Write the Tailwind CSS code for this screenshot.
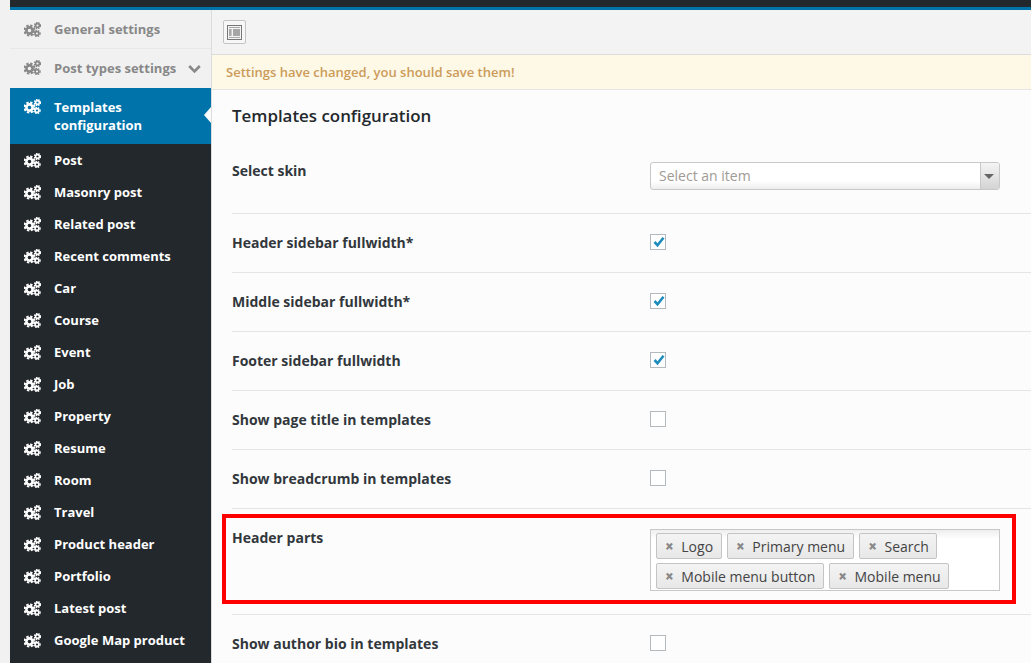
<!DOCTYPE html>
<html lang="en">
<head>
<meta charset="UTF-8">
<title>Templates configuration</title>
<script src="https://cdn.jsdelivr.net/npm/@tailwindcss/browser@4"></script>
</head>
<body class="h-[663px] w-[1031px] overflow-hidden bg-[#f1f1f1] font-['Open_Sans',sans-serif]">
<svg class="hidden">
  <symbol id="cogs" viewBox="0 0 17 15">
    <circle cx="5.5" cy="8.5" r="3.1" fill="none" stroke="currentColor" stroke-width="2.6"/>
    <circle cx="5.5" cy="8.5" r="5" fill="none" stroke="currentColor" stroke-width="2" stroke-dasharray="2.4 1.53"/>
    <circle cx="13.5" cy="3.5" r="1.9" fill="none" stroke="currentColor" stroke-width="1.6"/>
    <circle cx="13.5" cy="3.5" r="3.1" fill="none" stroke="currentColor" stroke-width="1.2" stroke-dasharray="1.5 1.03"/>
    <circle cx="13" cy="11.5" r="1.9" fill="none" stroke="currentColor" stroke-width="1.6"/>
    <circle cx="13" cy="11.5" r="3.1" fill="none" stroke="currentColor" stroke-width="1.2" stroke-dasharray="1.5 1.03"/>
  </symbol>
</svg>
<div class="ml-[10px] h-[7px] bg-[#23282d]"></div>
<div class="ml-[10px] h-[3px] bg-[#0073aa]"></div>
<div class="ml-[10px] flex h-[653px]">
  <!-- Sidebar -->
  <aside class="w-[201px] shrink-0 bg-[#23282d] text-[13px] leading-[18px] font-bold text-white">
    <div class="flex h-[39px] items-center gap-[13px] border-b border-[#e8e8e8] bg-[#f1f1f1] pl-[14px] text-[#888]">
      <svg class="h-[15px] w-[17px]"><use href="#cogs"/></svg><span>General settings</span>
    </div>
    <div class="flex h-[39px] items-center gap-[13px] bg-[#f1f1f1] pb-[2px] pl-[14px] text-[#888]">
      <svg class="h-[15px] w-[17px]"><use href="#cogs"/></svg><span>Post types settings</span>
      <svg class="mt-[2px] -ml-[1px] h-[10px] w-[13px]" viewBox="0 0 13 10" fill="none" stroke="currentColor" stroke-width="2.6"><path d="M1.2 2l5.3 5.3L11.8 2"/></svg>
    </div>
    <div class="relative flex h-[56px] gap-[13px] bg-[#0073aa] pt-[10px] pl-[14px]">
      <svg class="mt-[1px] h-[15px] w-[17px]"><use href="#cogs"/></svg><span>Templates<br>configuration</span>
      <div class="absolute top-[19px] right-0 border-y-[8px] border-r-[7px] border-y-transparent border-r-[#fcfcfc]"></div>
    </div>
    <div class="flex h-[32px] items-center gap-[13px] pl-[14px]"><svg class="h-[15px] w-[17px]"><use href="#cogs"/></svg><span>Post</span></div>
    <div class="flex h-[32px] items-center gap-[13px] pl-[14px]"><svg class="h-[15px] w-[17px]"><use href="#cogs"/></svg><span>Masonry post</span></div>
    <div class="flex h-[32px] items-center gap-[13px] pl-[14px]"><svg class="h-[15px] w-[17px]"><use href="#cogs"/></svg><span>Related post</span></div>
    <div class="flex h-[32px] items-center gap-[13px] pl-[14px]"><svg class="h-[15px] w-[17px]"><use href="#cogs"/></svg><span>Recent comments</span></div>
    <div class="flex h-[32px] items-center gap-[13px] pl-[14px]"><svg class="h-[15px] w-[17px]"><use href="#cogs"/></svg><span>Car</span></div>
    <div class="flex h-[32px] items-center gap-[13px] pl-[14px]"><svg class="h-[15px] w-[17px]"><use href="#cogs"/></svg><span>Course</span></div>
    <div class="flex h-[32px] items-center gap-[13px] pl-[14px]"><svg class="h-[15px] w-[17px]"><use href="#cogs"/></svg><span>Event</span></div>
    <div class="flex h-[32px] items-center gap-[13px] pl-[14px]"><svg class="h-[15px] w-[17px]"><use href="#cogs"/></svg><span>Job</span></div>
    <div class="flex h-[32px] items-center gap-[13px] pl-[14px]"><svg class="h-[15px] w-[17px]"><use href="#cogs"/></svg><span>Property</span></div>
    <div class="flex h-[32px] items-center gap-[13px] pl-[14px]"><svg class="h-[15px] w-[17px]"><use href="#cogs"/></svg><span>Resume</span></div>
    <div class="flex h-[32px] items-center gap-[13px] pl-[14px]"><svg class="h-[15px] w-[17px]"><use href="#cogs"/></svg><span>Room</span></div>
    <div class="flex h-[32px] items-center gap-[13px] pl-[14px]"><svg class="h-[15px] w-[17px]"><use href="#cogs"/></svg><span>Travel</span></div>
    <div class="flex h-[32px] items-center gap-[13px] pl-[14px]"><svg class="h-[15px] w-[17px]"><use href="#cogs"/></svg><span>Product header</span></div>
    <div class="flex h-[32px] items-center gap-[13px] pl-[14px]"><svg class="h-[15px] w-[17px]"><use href="#cogs"/></svg><span>Portfolio</span></div>
    <div class="flex h-[32px] items-center gap-[13px] pl-[14px]"><svg class="h-[15px] w-[17px]"><use href="#cogs"/></svg><span>Latest post</span></div>
    <div class="flex h-[32px] items-center gap-[13px] pl-[14px]"><svg class="h-[15px] w-[17px]"><use href="#cogs"/></svg><span>Google Map product</span></div>
  </aside>

  <!-- Main -->
  <main class="min-w-0 flex-1 border-l border-[#dcdcdc] bg-[#fcfcfc]">
    <div class="flex h-[45px] items-center border-b border-[#dcdcdc] bg-[#f3f3f3] pl-[11px]">
      <div class="flex h-[24px] w-[23px] items-center justify-center rounded-[2px] border border-[#c4c4c4] bg-[#f7f7f7]">
        <svg class="h-[15px] w-[15px]" viewBox="0 0 15 15"><rect x="0.5" y="0.5" width="14" height="14" fill="#f4f4f4" stroke="#777"/><rect x="2" y="2" width="11" height="1" fill="#aaa"/><rect x="2" y="12" width="11" height="1" fill="#aaa"/><rect x="2" y="4" width="2.6" height="7" fill="#aaa"/><rect x="6" y="4" width="7" height="7" fill="#a6a6a6"/></svg>
      </div>
    </div>
    <div class="flex h-[35px] items-center border-b border-[#e5e5e5] bg-[#fef8e7] pt-[2px] pl-[14px] text-[13px] font-semibold text-[#cb9c5a]">Settings have changed, you should save them!</div>

    <div class="pl-[20px]">
      <h2 class="pt-[14px] text-[16.9px] leading-[24px] font-semibold text-[#23282d]">Templates configuration</h2>

      <div class="flex h-[86px] border-b border-[#e5e5e5] pt-[32px] text-[14px] leading-[20px] font-bold text-[#32373c]">
        <div class="w-[418px] shrink-0 pt-[1px]">Select skin</div>
        <div class="mt-[2px] flex h-[28px] w-[350px] overflow-hidden rounded-[3px] border border-[#c8c8c8] bg-gradient-to-b from-white from-70% to-[#eeeeee]">
          <span class="flex-1 pl-[8px] text-[14px] leading-[26px] font-normal text-[#a09a94]">Select an item</span>
          <span class="flex w-[19px] items-center justify-center border-l border-[#c8c8c8] bg-gradient-to-b from-[#f4f4f4] to-[#d4d4d4] pr-[3px]">
            <span class="h-0 w-0 border-x-[5px] border-t-[5px] border-x-transparent border-t-[#666]"></span>
          </span>
        </div>
      </div>

      <div class="flex h-[59px] items-center border-b border-[#e5e5e5] pb-[2px] text-[14px] font-bold text-[#32373c]">
        <div class="w-[418px] shrink-0">Header sidebar fullwidth*</div>
        <div class="flex h-[16px] w-[16px] items-center justify-center border border-[#b4b9be] bg-white"><svg class="ml-[2px] h-[12px] w-[12px] shrink-0" viewBox="0 0 12 12" fill="none" stroke="#1e8cbe" stroke-width="2.6"><path d="M1.5 6l3 3.2L10.5 1.8"/></svg></div>
      </div>
      <div class="flex h-[59px] items-center border-b border-[#e5e5e5] pb-[2px] text-[14px] font-bold text-[#32373c]">
        <div class="w-[418px] shrink-0">Middle sidebar fullwidth*</div>
        <div class="flex h-[16px] w-[16px] items-center justify-center border border-[#b4b9be] bg-white"><svg class="ml-[2px] h-[12px] w-[12px] shrink-0" viewBox="0 0 12 12" fill="none" stroke="#1e8cbe" stroke-width="2.6"><path d="M1.5 6l3 3.2L10.5 1.8"/></svg></div>
      </div>
      <div class="flex h-[59px] items-center border-b border-[#e5e5e5] pb-[2px] text-[14px] font-bold text-[#32373c]">
        <div class="w-[418px] shrink-0">Footer sidebar fullwidth</div>
        <div class="flex h-[16px] w-[16px] items-center justify-center border border-[#b4b9be] bg-white"><svg class="ml-[2px] h-[12px] w-[12px] shrink-0" viewBox="0 0 12 12" fill="none" stroke="#1e8cbe" stroke-width="2.6"><path d="M1.5 6l3 3.2L10.5 1.8"/></svg></div>
      </div>
      <div class="flex h-[59px] items-center border-b border-[#e5e5e5] pb-[2px] text-[14px] font-bold text-[#32373c]">
        <div class="w-[418px] shrink-0">Show page title in templates</div>
        <div class="h-[16px] w-[16px] border border-[#b4b9be] bg-white"></div>
      </div>
      <div class="flex h-[59px] items-center border-b border-[#e5e5e5] pb-[2px] text-[14px] font-bold text-[#32373c]">
        <div class="w-[418px] shrink-0">Show breadcrumb in templates</div>
        <div class="h-[16px] w-[16px] border border-[#b4b9be] bg-white"></div>
      </div>

      <div class="relative flex h-[106px] border-b border-[#e5e5e5] pt-[20px] text-[14px] font-bold text-[#32373c]">
        <div class="-mt-[1px] w-[418px] shrink-0 leading-[20px]">Header parts</div>
        <div class="flex h-[62px] w-[350px] flex-wrap content-start gap-x-[5.5px] gap-y-[4px] border border-[#c8c8c8] bg-gradient-to-b from-[#eeeeee] to-white to-[15%] pt-[3px] pl-[5px] text-[14px] font-normal">
          <span class="flex h-[26px] items-center gap-[7.5px] rounded-[2px] border border-[#c4c4c4] bg-gradient-to-b from-[#f4f4f4] to-[#e8e8e8] pr-[7.5px] pl-[8px] text-[#444]"><span class="text-[15px] font-extrabold text-[#888]">×</span>Logo</span>
          <span class="flex h-[26px] items-center gap-[7.5px] rounded-[2px] border border-[#c4c4c4] bg-gradient-to-b from-[#f4f4f4] to-[#e8e8e8] pr-[7.5px] pl-[8px] text-[#444]"><span class="text-[15px] font-extrabold text-[#888]">×</span>Primary menu</span>
          <span class="flex h-[26px] items-center gap-[7.5px] rounded-[2px] border border-[#c4c4c4] bg-gradient-to-b from-[#f4f4f4] to-[#e8e8e8] pr-[7.5px] pl-[8px] text-[#444]"><span class="text-[15px] font-extrabold text-[#888]">×</span>Search</span>
          <span class="flex h-[26px] items-center gap-[7.5px] rounded-[2px] border border-[#c4c4c4] bg-gradient-to-b from-[#f4f4f4] to-[#e8e8e8] pr-[7.5px] pl-[8px] text-[#444]"><span class="text-[15px] font-extrabold text-[#888]">×</span>Mobile menu button</span>
          <span class="flex h-[26px] items-center gap-[7.5px] rounded-[2px] border border-[#c4c4c4] bg-gradient-to-b from-[#f4f4f4] to-[#e8e8e8] pr-[7.5px] pl-[8px] text-[#444]"><span class="text-[15px] font-extrabold text-[#888]">×</span>Mobile menu</span>
        </div>
        <!-- red annotation drawn over the row -->
        <div class="absolute top-[5px] -left-[10px] h-[90px] w-[794px] border-4 border-[#ff0000]"></div>
      </div>

      <div class="flex h-[59px] items-center pb-[2px] text-[14px] font-bold text-[#32373c]">
        <div class="w-[418px] shrink-0">Show author bio in templates</div>
        <div class="mb-[2px] h-[16px] w-[16px] border border-[#b4b9be] bg-white"></div>
      </div>
    </div>
  </main>
</div>
</body>
</html>
